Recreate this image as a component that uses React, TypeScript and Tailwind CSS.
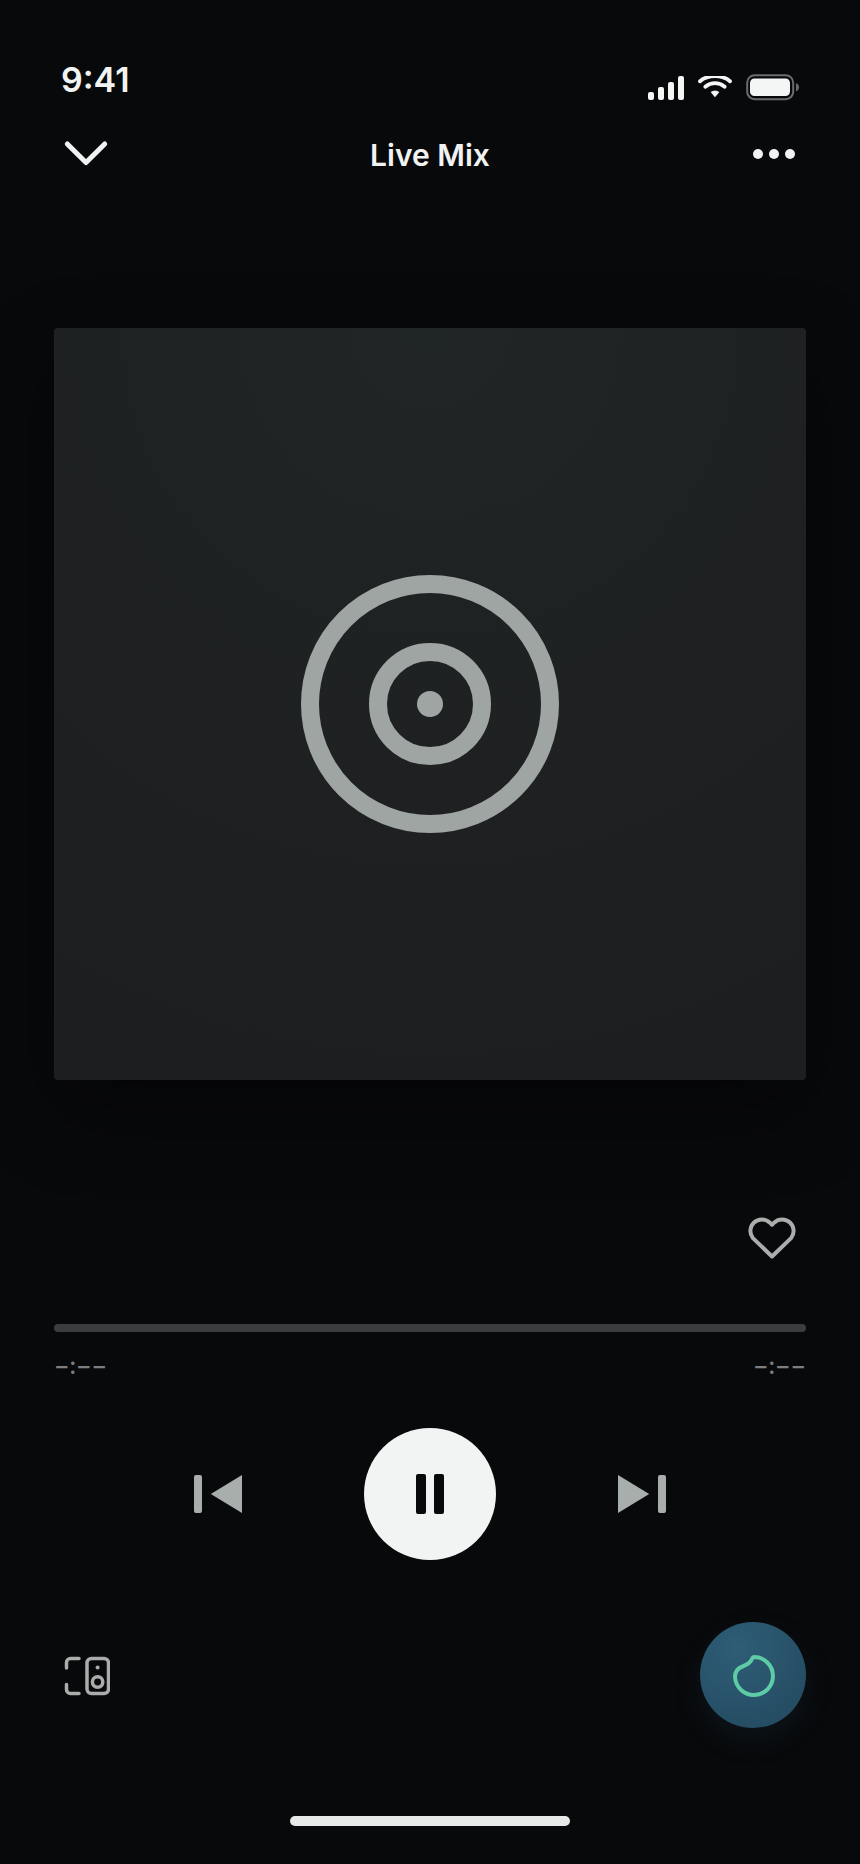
import { useState } from "react";

function StatusIcons() {
  return (
    <div className="flex items-end gap-[13px] text-[#f4f5f5]">
      <svg width="36" height="28" viewBox="0 0 36 28" fill="currentColor">
        <rect x="0" y="18" width="6" height="8" rx="2" />
        <rect x="10" y="13" width="6" height="13" rx="2" />
        <rect x="20" y="8" width="6" height="18" rx="2" />
        <rect x="30" y="2" width="6" height="24" rx="2" />
      </svg>
      <svg width="36" height="28" viewBox="0 0 36 28" fill="none" stroke="currentColor" strokeLinecap="round">
        <defs>
          <clipPath id="wifi-clip">
            <rect x="0" y="2" width="36" height="26" />
          </clipPath>
        </defs>
        <g clipPath="url(#wifi-clip)" strokeWidth="3.8">
          <path d="M3 7.2C11 .4 25 .4 33 7.2" />
          <path d="M8.3 12.7C14 8 22 8 27.7 12.7" />
        </g>
        <path d="M13.6 18C16.4 16 19.6 16 22.4 18L18 23.2Z" fill="currentColor" stroke="none" />
      </svg>
      <svg width="53" height="28" viewBox="0 0 53 28">
        <rect x="1.2" y="1.2" width="46" height="24" rx="7.5" fill="none" stroke="#6a6c6d" strokeWidth="2" />
        <rect x="4" y="4.5" width="40" height="17.5" rx="4.5" fill="currentColor" />
        <path d="M50 9.2c1.9.6 3 2.1 3 4s-1.1 3.4-3 4z" fill="#6a6c6d" />
      </svg>
    </div>
  );
}

function SkipIcon({ flip = false }: { flip?: boolean }) {
  return (
    <svg width="48" height="40" viewBox="0 0 48 40" fill="currentColor" className={flip ? "-scale-x-100" : ""}>
      <rect x="0" y="1" width="8" height="38" rx="2" />
      <path d="M48 1v38L16.8 20z" />
    </svg>
  );
}

export default function App() {
  const [playing, setPlaying] = useState(true);
  const [liked, setLiked] = useState(false);

  return (
    <div className="min-h-screen bg-[#08090b] px-[54px] pt-[60px] pb-[38px] flex flex-col font-['Inter',sans-serif] text-[#f1f3f3]">
      {/* Status bar */}
      <div className="flex h-[42px] justify-between px-[7px]">
        <span className="text-[34px] leading-10 font-semibold">9:41</span>
        <StatusIcons />
      </div>

      {/* Header */}
      <header className="mt-[26px] flex h-[52px] items-center justify-between px-2">
        <button aria-label="Close player" className="flex size-12 items-center justify-center">
          <svg width="48" height="48" viewBox="0 0 48 48" fill="none" stroke="currentColor" strokeWidth="5" strokeLinecap="round" strokeLinejoin="round">
            <path d="M5.3 14L24 32.5L42.7 14" />
          </svg>
        </button>
        <h1 className="pt-0.5 text-[30px] leading-9 font-semibold">Live Mix</h1>
        <button aria-label="More options" className="flex size-12 items-center justify-center">
          <svg width="48" height="48" viewBox="0 0 48 48" fill="currentColor">
            <circle cx="8" cy="24" r="5" />
            <circle cx="24" cy="24" r="5" />
            <circle cx="40" cy="24" r="5" />
          </svg>
        </button>
      </header>

      {/* Artwork */}
      <div className="mt-[148px] flex aspect-square w-full items-center justify-center rounded bg-[radial-gradient(circle_at_50%_0%,#202525_0%,#1f2222_35%,#1e2022_60%,#1d1e20_100%)] shadow-[0_32px_80px_rgba(0,0,0,0.45)]">
        <svg width="258" height="258" viewBox="0 0 258 258" fill="none" stroke="#9fa5a3" strokeWidth="18">
          <circle cx="129" cy="129" r="120" />
          <circle cx="129" cy="129" r="52" />
          <circle cx="129" cy="129" r="13" fill="#9fa5a3" stroke="none" />
        </svg>
      </div>

      <div className="mt-[134px] flex justify-end px-2">
        <button
          aria-label="Like"
          aria-pressed={liked}
          onClick={() => setLiked(!liked)}
          className="size-12 text-[#a9adac]"
        >
          <svg width="48" height="48" viewBox="0 0 48 48" fill={liked ? "currentColor" : "none"} stroke="currentColor" strokeWidth="4" strokeLinejoin="round" className="overflow-visible">
            <path d="M22 10.7L19.6 8.4A11.5 11.5 0 0 0 2.9 24.100L22 42.500L41.100 24.100A11.5 11.5 0 0 0 24.4 8.4z" />
          </svg>
        </button>
      </div>

      {/* Progress */}
      <input
        type="range"
        aria-label="Playback position"
        min={0}
        max={100}
        defaultValue={0}
        className="mt-[62px] block h-2 w-full appearance-none rounded-full bg-[#3b3e3f] [&::-webkit-slider-thumb]:size-0 [&::-webkit-slider-thumb]:appearance-none"
      />
      <div className="mt-[18px] flex h-8 justify-between text-2xl leading-8 font-medium text-[#7b7f7f] tabular-nums">
        <span>−:−−</span>
        <span>−:−−</span>
      </div>

      {/* Controls */}
      <div className="mt-[46px] flex items-center justify-center gap-[122px] text-[#a8aeac]">
        <button aria-label="Previous">
          <SkipIcon />
        </button>
        <button
          aria-label={playing ? "Pause" : "Play"}
          onClick={() => setPlaying(!playing)}
          className="flex size-[132px] items-center justify-center rounded-full bg-[#f2f4f4] text-[#08090b]"
        >
          <svg width="40" height="40" viewBox="0 0 40 40" fill="currentColor">
            {playing ? (
              <>
                <rect x="6" y="0" width="10" height="40" rx="2" />
                <rect x="24" y="0" width="10" height="40" rx="2" />
              </>
            ) : (
              <path d="M8 1v38l30-19z" />
            )}
          </svg>
        </button>
        <button aria-label="Next">
          <SkipIcon flip />
        </button>
      </div>

      {/* Devices and live */}
      <div className="mt-[62px] flex items-center justify-between pl-2">
        <button aria-label="Devices" className="size-12 text-[#a9adac]">
          <svg width="48" height="48" viewBox="0 0 48 48" fill="none" stroke="currentColor" strokeWidth="3.5" strokeLinecap="round">
            <path d="M17 7.5H8.5a4 4 0 0 0-4 4V17" />
            <path d="M4.5 33.5V38.5a4 4 0 0 0 4 4H17" />
            <rect x="25" y="7.5" width="21.5" height="35" rx="4.5" />
            <circle cx="35.6" cy="31" r="5.2" />
            <circle cx="35.6" cy="16.5" r="2" fill="currentColor" stroke="none" />
          </svg>
        </button>
        <button
          aria-label="Live"
          className="flex size-[106px] items-center justify-center rounded-full bg-[radial-gradient(circle_at_35%_25%,#2e5d76,#22485e)] text-[#5dcba6] shadow-[0_12px_28px_rgba(34,72,94,0.18)]"
        >
          <svg width="48" height="48" viewBox="0 0 48 48" fill="none" stroke="currentColor" strokeWidth="4" strokeLinejoin="round">
            <path d="M25 6A19 19 0 1 1 6 26C6 20.5 8.5 17.3 13.5 15.5C18.5 13.6 20.5 12.5 22.3 9.3C23.2 7.3 23.7 6 25 6Z" />
          </svg>
        </button>
      </div>

      {/* Home indicator */}
      <div className="mx-auto mt-[88px] h-2.5 w-[280px] rounded-full bg-[#e6e9e8]" />
    </div>
  );
}
